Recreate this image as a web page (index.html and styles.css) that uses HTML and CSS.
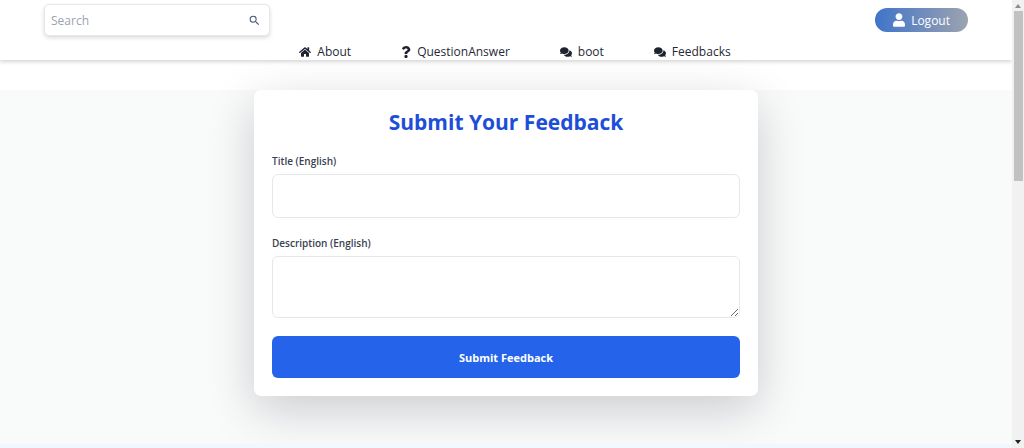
FILE: index.html
```html
<!DOCTYPE html>
<html lang="en">
<head>
<meta charset="utf-8">
<meta name="viewport" content="width=device-width, initial-scale=1">
<title>Submit Your Feedback</title>
<link rel="stylesheet" href="styles.css">
</head>
<body>
<svg class="sprite" aria-hidden="true">
  <symbol id="comments" viewBox="0 0 576 512"><path d="M416 192c0-88.400-93.100-160-208-160S0 103.600 0 192c0 34.300 14.100 65.900 38 92-13.400 30.200-35.500 54.200-35.800 54.500-2.200 2.300-2.800 5.700-1.500 8.700S4.800 352 8 352c36.600 0 66.900-12.300 88.700-25 32.200 15.700 70.300 25 111.300 25 114.900 0 208-71.600 208-160zm122 220c23.900-26 38-57.700 38-92 0-66.900-53.500-124.200-129.300-148.100.9 6.600 1.300 13.300 1.300 20.100 0 105.900-107.700 192-240 192-10.800 0-21.300-.8-31.700-1.900C207.800 439.600 281.800 480 368 480c41 0 79.100-9.200 111.300-25 21.800 12.700 52.100 25 88.700 25 3.200 0 6.100-1.900 7.300-4.800 1.300-2.900.7-6.300-1.500-8.700-.3-.3-22.400-24.200-35.800-54.500z"/></symbol>
</svg>
<div class="shell">
  <div class="page">
    <header class="header">
      <div class="header-top">
        <form class="search" role="search">
          <input class="search-input" type="search" placeholder="Search" aria-label="Search">
          <button class="search-button" type="button" aria-label="Search">
            <svg class="search-icon" viewBox="0 0 24 24" aria-hidden="true"><path d="M15.500 14h-.79l-.28-.27A6.470 6.470 0 0 0 16 9.500 6.500 6.500 0 1 0 9.500 16c1.610 0 3.090-.59 4.230-1.570l.27.28v.79l5 4.990L20.490 19l-4.990-5zm-6 0C7.010 14 5 11.990 5 9.500S7.010 5 9.500 5 14 7.010 14 9.500 11.990 14 9.500 14z"/></svg>
          </button>
        </form>
        <button class="logout" type="button">
          <svg class="user-icon" viewBox="0 0 448 512" aria-hidden="true"><path d="M224 256c70.700 0 128-57.300 128-128S294.700 0 224 0 96 57.300 96 128s57.300 128 128 128zm89.600 32h-16.700c-22.200 10.200-46.900 16-72.900 16s-50.600-5.800-72.900-16h-16.700C60.200 288 0 348.200 0 422.400V464c0 26.500 21.500 48 48 48h352c26.500 0 48-21.500 48-48v-41.600c0-74.200-60.200-134.400-134.400-134.400z"/></svg>
          Logout
        </button>
      </div>
      <nav class="nav">
        <a class="nav-link" href="#about">
          <svg class="nav-icon" viewBox="0 0 576 512" aria-hidden="true"><path d="M280.400 148.300L96 300.100V464a16 16 0 0 0 16 16l112.100-.3a16 16 0 0 0 15.900-16V368a16 16 0 0 1 16-16h64a16 16 0 0 1 16 16v95.600a16 16 0 0 0 16 16.100L464 480a16 16 0 0 0 16-16V300L295.700 148.300a12.200 12.200 0 0 0-15.300 0zM571.600 251.500L488 182.600V44a12 12 0 0 0-12-12h-56a12 12 0 0 0-12 12v72.600L318.500 43a48 48 0 0 0-61 0L4.300 251.500a12 12 0 0 0-1.600 16.900l25.500 31a12 12 0 0 0 16.900 1.600l235.200-193.700a12.200 12.200 0 0 1 15.300 0L530.900 301a12 12 0 0 0 16.900-1.600l25.500-31a12 12 0 0 0-1.700-16.900z"/></svg>
          About
        </a>
        <a class="nav-link" href="#questions">
          <svg class="nav-icon nav-icon-narrow" viewBox="0 0 384 512" aria-hidden="true"><path d="M202 0C122.500 0 70.500 32.500 29.700 90.500c-7.400 10.500-5.100 25 5.200 32.700l43.100 32.700c10.300 7.900 25 6 33-4.100 25-31.800 43.600-50.100 82.700-50.100 30.800 0 68.800 19.800 68.800 49.600 0 22.500-18.600 34.100-49 51.200-35.400 19.800-82.300 44.500-82.300 106.400V320c0 13.300 10.700 24 24 24h72.500c13.300 0 24-10.700 24-24v-5.800c0-42.900 125.300-44.600 125.300-160.600C377 66.300 286.400 0 202 0zM192 373.500c-38.200 0-69.300 31.100-69.300 69.300S153.800 512 192 512s69.300-31.100 69.300-69.300-31.100-69.200-69.300-69.200z"/></svg>
          QuestionAnswer
        </a>
        <a class="nav-link" href="#boot"><svg class="nav-icon" aria-hidden="true"><use href="#comments"/></svg>boot</a>
        <a class="nav-link" href="#feedbacks"><svg class="nav-icon" aria-hidden="true"><use href="#comments"/></svg>Feedbacks</a>
      </nav>
    </header>
    <main class="main">
      <form class="card">
        <h1 class="title">Submit Your Feedback</h1>
        <div class="field">
          <label class="label" for="title">Title (English)</label>
          <input class="control" id="title" type="text">
        </div>
        <div class="field">
          <label class="label" for="description">Description (English)</label>
          <textarea class="control control-tall" id="description"></textarea>
        </div>
        <button class="submit" type="button">Submit Feedback</button>
      </form>
    </main>
    <footer class="footer"></footer>
  </div>
  <div class="scrollbar" aria-hidden="true">
    <svg class="arrow arrow-up" viewBox="0 0 6 4"><path d="M0 4 3 0l3 4z"/></svg>
    <div class="thumb"></div>
    <svg class="arrow arrow-down" viewBox="0 0 6 4"><path d="M0 0h6L3 4z"/></svg>
  </div>
</div>
</body>
</html>
```
FILE: styles.css
```css
*, *::before, *::after { box-sizing: border-box; }

body {
  margin: 0;
  font-family: "Open Sans", "Noto Sans", sans-serif;
  color: #1f2937;
  background: #fff;
}

button, input, textarea { font: inherit; }

.sprite { display: none; }

.shell {
  display: flex;
  min-height: 100vh;
}

.page {
  flex: 1;
  min-width: 0;
  display: flex;
  flex-direction: column;
}

.header {
  padding-top: 4px;
  background: #fff;
  box-shadow: 0 2px 4px rgba(0, 0, 0, 0.16);
}

.header-top {
  display: flex;
  justify-content: space-between;
  align-items: center;
  padding: 0 44px;
}

.search {
  display: flex;
  align-items: center;
  width: 226px;
  height: 32px;
  padding: 0 8px 0 6px;
  border: 1px solid #e5e7eb;
  border-radius: 5px;
  background: #fff;
  box-shadow: 0 2px 4px rgba(0, 0, 0, 0.14);
}

.search-input {
  flex: 1;
  min-width: 0;
  padding: 0;
  border: 0;
  outline: 0;
  background: transparent;
  font-size: 12px;
}

.search-input::placeholder { color: #9ca3af; }

.search-button {
  display: flex;
  padding: 0;
  border: 0;
  background: transparent;
}

.search-icon {
  width: 13px;
  height: 13px;
  fill: #4b5878;
}

.logout {
  display: flex;
  align-items: center;
  gap: 6px;
  height: 24px;
  padding: 0 18px;
  border: 0;
  border-radius: 12px;
  background: linear-gradient(90deg, #4074ca, #9ca3af);
  color: #fff;
  font-size: 12px;
}

.user-icon {
  width: 12px;
  height: 14px;
  fill: currentColor;
}

.nav {
  display: flex;
  justify-content: center;
  gap: 50px;
  padding: 7px 0 0 18px;
}

.nav-link {
  display: flex;
  align-items: center;
  gap: 6px;
  color: inherit;
  font-size: 12px;
  line-height: 17px;
  text-decoration: none;
}

.nav-icon {
  width: 12px;
  height: 12px;
  fill: #1f2330;
}

.nav-icon-narrow { width: 10px; }

.main {
  flex: 1;
  margin-top: 30px;
  padding: 0 16px 48px;
  background: #f9fafa;
}

.card {
  display: flex;
  flex-direction: column;
  gap: 18px;
  max-width: 504px;
  margin: 0 auto;
  padding: 18px;
  border-radius: 7px;
  background: #fff;
  box-shadow: 0 14px 48px rgba(10, 10, 20, 0.19);
}

.title {
  margin: 0;
  color: #1d4ed8;
  font-size: 21px;
  font-weight: 700;
  line-height: 28px;
  text-align: center;
}

.field {
  display: flex;
  flex-direction: column;
  gap: 6px;
}

.label {
  color: #374151;
  font-size: 10px;
  font-weight: 600;
  line-height: 14px;
}

.control {
  width: 100%;
  height: 44px;
  padding: 10px;
  border: 1px solid #e5e7eb;
  border-radius: 6px;
  background: #fff;
  font-size: 12px;
}

.control-tall {
  height: 62px;
  resize: vertical;
}

.submit {
  height: 42px;
  border: 0;
  border-radius: 6px;
  background: #2563eb;
  color: #fff;
  font-size: 11px;
  font-weight: 700;
}

.footer {
  height: 4px;
  background: #f0f8ff;
}

.scrollbar {
  display: flex;
  flex-direction: column;
  align-items: center;
  width: 12px;
  padding: 4px 0;
  background: #f1f1f1;
}

.arrow {
  width: 6px;
  height: 4px;
}

.arrow-up { fill: #8b8b93; }

.arrow-down {
  margin-top: auto;
  fill: #222;
}

.thumb {
  width: 9px;
  height: 38vh;
  margin-top: 3px;
  background: #c1c1c1;
}
```
